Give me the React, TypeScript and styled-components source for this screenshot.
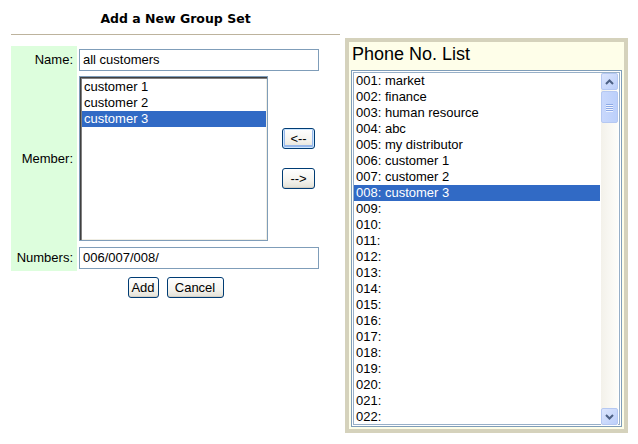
import React from 'react';
import styled, { createGlobalStyle } from 'styled-components';

const GlobalStyle = createGlobalStyle`
  body {
    margin: 0;
    background: #ffffff;
    font-family: 'Liberation Sans', Arial, sans-serif;
    font-size: 13px;
    color: #000000;
  }
`;

const Page = styled.div`
  display: flex;
  align-items: flex-start;
  gap: 5px;
  padding: 0 0 0 11px;
  width: 638px;
  height: 444px;
  box-sizing: border-box;
`;

const LeftPanel = styled.div`
  width: 329px;
  display: flex;
  flex-direction: column;
`;

const Title = styled.div`
  font-family: 'DejaVu Sans', Verdana, sans-serif;
  font-weight: bold;
  font-size: 12.5px;
  text-align: center;
  height: 34px;
  line-height: 37px;
  border-bottom: 1px solid #bdb39d;
`;

const Form = styled.div`
  display: grid;
  grid-template-columns: 66px 189px 50px;
  grid-template-rows: 27px 171px 27px;
  column-gap: 2px;
  margin-top: 11px;
`;

const Label = styled.div`
  background: #ddfedd;
  display: flex;
  align-items: center;
  justify-content: flex-end;
  padding-right: 4px;
  white-space: nowrap;
`;

const Field = styled.div<{ $span?: number }>`
  grid-column: span ${(p) => p.$span ?? 1};
  display: flex;
  align-items: center;
`;

const TextInput = styled.div`
  width: 240px;
  height: 22px;
  box-sizing: border-box;
  border: 1px solid #7f9db9;
  padding: 0 3px;
  line-height: 20px;
`;

const MemberBox = styled.div`
  width: 189px;
  height: 165px;
  box-sizing: border-box;
  border: 1px solid #7f9db9;
  box-shadow: inset 1px 1px 0 #404040, inset 2px 2px 0 #808080, inset -1px -1px 0 #f0eee4;
  padding: 2px 1px 0 2px;
`;

const Option = styled.div<{ $selected?: boolean }>`
  height: 16px;
  line-height: 16px;
  padding-left: 2px;
  white-space: nowrap;
  background: ${(p) => (p.$selected ? '#316ac5' : 'transparent')};
  color: ${(p) => (p.$selected ? '#ffffff' : '#000000')};
`;

const MoveButtons = styled.div`
  display: flex;
  flex-direction: column;
  gap: 19px;
  padding-left: 12px;
`;

const XpButton = styled.button<{ $hot?: boolean; $w: number }>`
  width: ${(p) => p.$w}px;
  height: 21px;
  box-sizing: border-box;
  padding: 0;
  font-family: 'Liberation Sans', Arial, sans-serif;
  font-size: 13px;
  color: #000;
  border: 1px solid #003c74;
  border-radius: 3px;
  background: linear-gradient(#ffffff, #f4f3ee 60%, #e3e1d6);
  box-shadow: ${(p) =>
    p.$hot ? 'inset 0 0 0 1px #cee7ff, inset 0 -1px 0 2px #98b8ea' : 'inset 0 -1px 0 #d6d0c5'};
`;

const Actions = styled.div`
  display: flex;
  justify-content: center;
  gap: 8px;
  margin-top: 6px;
`;

const RightPanel = styled.div`
  margin-top: 38px;
  width: 283px;
  height: 395px;
  box-sizing: border-box;
  border: 4px solid #d5d2bc;
  background: #fefee9;
  padding: 0 2px;
  display: flex;
  flex-direction: column;
`;

const PanelTitle = styled.div`
  font-size: 18px;
  height: 28px;
  line-height: 25px;
  padding-left: 1px;
`;

const PhoneList = styled.div`
  height: 357px;
  box-sizing: border-box;
  border: 1px solid #7f9db9;
  box-shadow: inset 0 0 0 1px #ffffff, inset 0 0 0 2px #98b0c8;
  background: #ffffff;
  padding: 2px 3px 1px 2px;
  display: flex;
  overflow: hidden;
`;

const Rows = styled.div`
  flex: 1;
  overflow: hidden;
`;

const Scrollbar = styled.div`
  width: 17px;
  margin-left: 1px;
  display: flex;
  flex-direction: column;
  background: linear-gradient(90deg, #f3f1ea, #fdfdfa);
`;

const ScrollBtn = styled.div`
  height: 17px;
  box-sizing: border-box;
  border: 1px solid #b5c8f2;
  border-radius: 2px;
  background: linear-gradient(135deg, #dce6fd, #bccffa);
  display: flex;
  align-items: center;
  justify-content: center;
`;

const Thumb = styled.div`
  height: 32px;
  margin-top: 1px;
  box-sizing: border-box;
  border: 1px solid #b5c8f2;
  border-radius: 2px;
  background: linear-gradient(90deg, #c9d8fc, #bcd0fb);
  display: flex;
  flex-direction: column;
  align-items: center;
  justify-content: center;
  gap: 1px;
`;

const Grip = styled.div`
  width: 7px;
  height: 1px;
  background: #8da9e6;
  box-shadow: 0 1px 0 #eef3fe;
`;

const Track = styled.div`
  flex: 1;
`;

const Chevron = ({ up }: { up?: boolean }) => (
  <svg width="9" height="6" viewBox="0 0 9 6">
    <path
      d={up ? 'M1 5 L4.5 1.5 L8 5' : 'M1 1 L4.5 4.5 L8 1'}
      fill="none"
      stroke="#4d6185"
      strokeWidth="2"
    />
  </svg>
);

const members = ['customer 1', 'customer 2', 'customer 3'];

const names: Record<number, string> = {
  1: 'market',
  2: 'finance',
  3: 'human resource',
  4: 'abc',
  5: 'my distributor',
  6: 'customer 1',
  7: 'customer 2',
  8: 'customer 3',
};

const phones = Array.from({ length: 22 }, (_, i) => {
  const n = i + 1;
  return { id: n, text: `${String(n).padStart(3, '0')}: ${names[n] ?? ''}` };
});

const App = (): JSX.Element => (
  <Page>
    <GlobalStyle />
    <LeftPanel>
      <Title>Add a New Group Set</Title>
      <Form>
        <Label>Name:</Label>
        <Field $span={2}>
          <TextInput>all customers</TextInput>
        </Field>
        <Label>Member:</Label>
        <Field>
          <MemberBox>
            {members.map((m, i) => (
              <Option key={m} $selected={i === 2}>
                {m}
              </Option>
            ))}
          </MemberBox>
        </Field>
        <Field>
          <MoveButtons>
            <XpButton $w={33} $hot>
              {'<--'}
            </XpButton>
            <XpButton $w={33}>{'-->'}</XpButton>
          </MoveButtons>
        </Field>
        <Label>Numbers:</Label>
        <Field $span={2}>
          <TextInput>006/007/008/</TextInput>
        </Field>
      </Form>
      <Actions>
        <XpButton $w={31}>Add</XpButton>
        <XpButton $w={57}>Cancel</XpButton>
      </Actions>
    </LeftPanel>
    <RightPanel>
      <PanelTitle>Phone No. List</PanelTitle>
      <PhoneList>
        <Rows>
          {phones.map((p) => (
            <Option key={p.id} $selected={p.id === 8}>
              {p.text}
            </Option>
          ))}
        </Rows>
        <Scrollbar>
          <ScrollBtn>
            <Chevron up />
          </ScrollBtn>
          <Thumb>
            <Grip />
            <Grip />
            <Grip />
            <Grip />
          </Thumb>
          <Track />
          <ScrollBtn>
            <Chevron />
          </ScrollBtn>
        </Scrollbar>
      </PhoneList>
    </RightPanel>
  </Page>
);

export default App;
